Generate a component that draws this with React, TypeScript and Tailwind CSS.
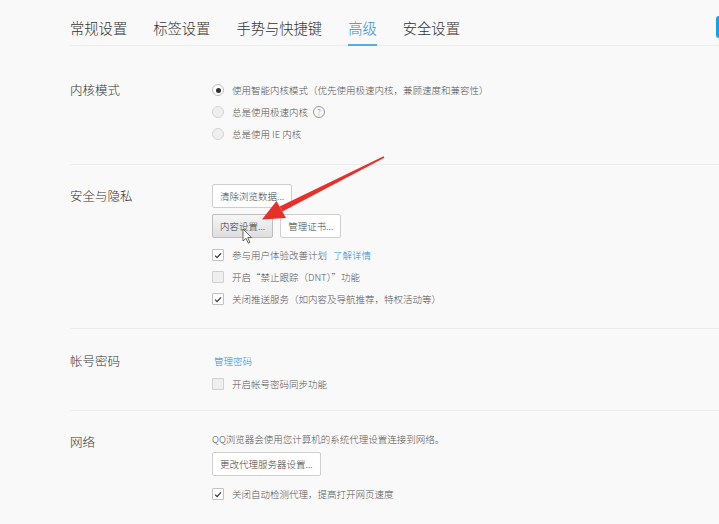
import React from "react";

const Check = () => (
  <svg width="11" height="11" viewBox="0 0 11 11">
    <path d="M2.3 5.6 L4.5 7.8 L8.8 3.2" fill="none" stroke="#3a3a3a" strokeWidth="1.4" />
  </svg>
);

function Checkbox({ checked }: { checked?: boolean }) {
  return (
    <span
      className={
        checked
          ? "w-[12px] h-[12px] border border-[#c2c2c2] bg-white rounded-[1px] flex items-center justify-center shrink-0"
          : "w-[12px] h-[12px] border border-[#d0d0d0] bg-[#efefef] rounded-[1px] flex items-center justify-center shrink-0"
      }
    >
      {checked ? <Check /> : null}
    </span>
  );
}

function Radio({ checked }: { checked?: boolean }) {
  return (
    <span
      className={
        checked
          ? "w-[12px] h-[12px] rounded-full border border-[#bdbdbd] bg-white flex items-center justify-center shrink-0"
          : "w-[12px] h-[12px] rounded-full border border-[#d4d4d4] bg-[#efefef] shrink-0"
      }
    >
      {checked ? <span className="w-[5px] h-[5px] rounded-full bg-[#333]" /> : null}
    </span>
  );
}

function Row({ children }: { children: React.ReactNode }) {
  return <div className="h-[22px] flex items-center gap-[8px] text-[9.5px] text-[#555]">{children}</div>;
}

function Btn({ children, pressed }: { children: React.ReactNode; pressed?: boolean }) {
  return (
    <div
      className={
        pressed
          ? "h-[24px] px-[7px] flex items-center border border-[#bdbdbd] rounded-[2px] bg-gradient-to-b from-[#f6f6f6] to-[#dedede] text-[9.5px] text-[#333]"
          : "h-[24px] px-[7px] flex items-center border border-[#cfcfcf] rounded-[2px] bg-white text-[9.5px] text-[#444]"
      }
    >
      {children}
    </div>
  );
}

const tabs = ["常规设置", "标签设置", "手势与快捷键", "高级", "安全设置"];

export default function App() {
  return (
    <div className="w-[719px] h-[524px] bg-[#f9f9f9] relative overflow-hidden font-light font-['Noto_Sans_CJK_SC','Noto_Sans',sans-serif]">
      <header className="ml-[70px] h-[46px] border-b border-[#ececec] flex">
        <div className="flex gap-[26px]">
          {tabs.map((t) => (
            <div
              key={t}
              className={
                t === "高级"
                  ? "relative pt-[18px] leading-[20px] text-[14.3px] text-[#2e8fd8]"
                  : "relative pt-[18px] leading-[20px] text-[14.3px] text-[#333]"
              }
            >
              {t}
              {t === "高级" ? <span className="absolute left-0 right-0 bottom-[-1px] h-[2px] bg-[#5aaae3]" /> : null}
            </div>
          ))}
        </div>
        <div className="ml-auto mt-[16px] w-[3px] h-[22px] bg-[#16a1e8] rounded-l-[3px]" />
      </header>

      <section className="ml-[70px] border-b border-[#ececec] flex pt-[33px] pb-[19px]">
        <div className="w-[142px] text-[12.5px] leading-[22px] text-[#333]">内核模式</div>
        <div className="flex flex-col">
          <Row>
            <Radio checked />
            <span>使用智能内核模式（优先使用极速内核，兼顾速度和兼容性）</span>
          </Row>
          <Row>
            <Radio />
            <span>总是使用极速内核</span>
            <span className="w-[12px] h-[12px] rounded-full border border-[#9a9a9a] flex items-center justify-center text-[8px] leading-none text-[#777] -ml-[3px]">
              ?
            </span>
          </Row>
          <Row>
            <Radio />
            <span>总是使用 IE 内核</span>
          </Row>
        </div>
      </section>

      <section className="ml-[70px] border-b border-[#ececec] flex pt-[19px] pb-[18px]">
        <div className="w-[142px] text-[12.5px] leading-[24px] text-[#333]">安全与隐私</div>
        <div className="flex flex-col">
          <div className="flex">
            <Btn>清除浏览数据...</Btn>
          </div>
          <div className="flex gap-[7px] mt-[6px]">
            <Btn pressed>内容设置...</Btn>
            <Btn>管理证书...</Btn>
          </div>
          <div className="mt-[6px]">
            <Row>
              <Checkbox checked />
              <span>
                参与用户体验改善计划<span className="ml-[6px] text-[#2f8de0]">了解详情</span>
              </span>
            </Row>
            <Row>
              <Checkbox />
              <span>开启“禁止跟踪（DNT）”功能</span>
            </Row>
            <Row>
              <Checkbox checked />
              <span>关闭推送服务（如内容及导航推荐，特权活动等）</span>
            </Row>
          </div>
        </div>
      </section>

      <section className="ml-[70px] border-b border-[#ececec] flex pt-[21px] pb-[15px]">
        <div className="w-[142px] text-[12.5px] leading-[22px] text-[#333]">帐号密码</div>
        <div className="flex flex-col">
          <div className="h-[22px] flex items-center text-[9.5px] text-[#2f8de0] pl-[2px]">管理密码</div>
          <div className="mt-[1px]">
            <Row>
              <Checkbox />
              <span>开启帐号密码同步功能</span>
            </Row>
          </div>
        </div>
      </section>

      <section className="ml-[70px] flex pt-[17px]">
        <div className="w-[142px] text-[12.5px] leading-[22px] text-[#333] pt-[3px]">网络</div>
        <div className="flex flex-col">
          <div className="h-[22px] flex items-center text-[9.5px] text-[#555]">
            QQ浏览器会使用您计算机的系统代理设置连接到网络。
          </div>
          <div className="flex mt-[2px]">
            <Btn>更改代理服务器设置...</Btn>
          </div>
          <div className="mt-[7px]">
            <Row>
              <Checkbox checked />
              <span>关闭自动检测代理，提高打开网页速度</span>
            </Row>
          </div>
        </div>
      </section>

      <svg className="absolute left-0 top-0 pointer-events-none" width="719" height="524" viewBox="0 0 719 524">
        <polygon points="384.4,157.8 383.6,156.2 279.6,206.6 282.4,211.4" fill="#e8302a" />
        <polygon points="262,219.5 276.5,201 286,218" fill="#e8302a" />
        <path
          d="M243 229 L243 241 L246 238.3 L248.3 243.2 L250 242.4 L247.7 237.6 L251.5 237.6 Z"
          fill="#fff"
          stroke="#444"
          strokeWidth="0.8"
        />
      </svg>
    </div>
  );
}
